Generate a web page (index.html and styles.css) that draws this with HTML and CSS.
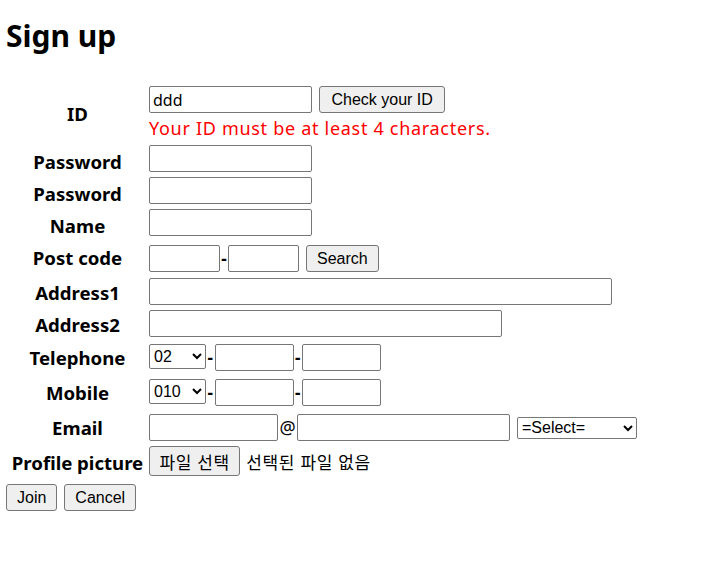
FILE: index.html
```html
<!DOCTYPE html>
<html lang="ko">
<head>
<meta charset="utf-8">
<title>Sign up</title>
<link rel="stylesheet" href="styles.css">
</head>
<body>
<h1 class="title">Sign up</h1>
<form class="signup">
  <table class="form-table">
    <tr class="row row-id">
      <th>ID</th>
      <td>
        <div class="field">
          <input class="input w-id" type="text" value="ddd">
          <button type="button" class="btn btn-gap btn-check">Check your ID</button>
        </div>
        <div class="error">Your ID must be at least 4 characters.</div>
      </td>
    </tr>
    <tr class="row row-low">
      <th>Password</th>
      <td><input class="input w-id" type="password"></td>
    </tr>
    <tr class="row row-low">
      <th>Password</th>
      <td><input class="input w-id" type="password"></td>
    </tr>
    <tr class="row row-low">
      <th>Name</th>
      <td><input class="input w-id" type="text"></td>
    </tr>
    <tr class="row row-post">
      <th>Post code</th>
      <td>
        <div class="field">
          <input class="input w-post" type="text"><span class="sep">-</span><input class="input w-post" type="text">
          <button type="button" class="btn btn-gap">Search</button>
        </div>
      </td>
    </tr>
    <tr class="row">
      <th>Address1</th>
      <td><input class="input w-addr1" type="text"></td>
    </tr>
    <tr class="row">
      <th>Address2</th>
      <td><input class="input w-addr2" type="text"></td>
    </tr>
    <tr class="row row-phone">
      <th>Telephone</th>
      <td>
        <div class="field field-top">
          <select class="select select-phone"><option>02</option><option>031</option><option>032</option></select><span class="sep sep-phone">-</span><input class="input w-phone" type="text"><span class="sep sep-phone">-</span><input class="input w-phone" type="text">
        </div>
      </td>
    </tr>
    <tr class="row row-phone">
      <th>Mobile</th>
      <td>
        <div class="field field-top">
          <select class="select select-phone"><option>010</option><option>011</option><option>016</option></select><span class="sep sep-phone">-</span><input class="input w-phone" type="text"><span class="sep sep-phone">-</span><input class="input w-phone" type="text">
        </div>
      </td>
    </tr>
    <tr class="row row-email">
      <th>Email</th>
      <td>
        <div class="field">
          <input class="input w-email1" type="text"><span class="at">@</span><input class="input w-email2" type="text">
          <select class="select select-email"><option>=Select=</option><option>naver.com</option><option>gmail.com</option></select>
        </div>
      </td>
    </tr>
    <tr class="row row-file">
      <th>Profile picture</th>
      <td>
        <div class="field">
          <button type="button" class="btn btn-file">파일 선택</button>
          <span class="file-name">선택된 파일 없음</span>
        </div>
      </td>
    </tr>
  </table>
  <div class="actions">
    <button type="submit" class="btn btn-action">Join</button>
    <button type="reset" class="btn btn-action">Cancel</button>
  </div>
</form>
</body>
</html>
```
FILE: styles.css
```css
html, body {
  background: #ffffff;
}

body {
  margin: 0;
  padding: 0 6px;
  font-family: "Noto Sans", "Noto Sans CJK KR", sans-serif;
  font-size: 16px;
  color: #000000;
}

.title {
  margin: 16px 0 0;
  height: 40px;
  font-size: 30px;
  font-weight: 700;
  line-height: 40px;
}

.signup {
  margin: 0;
}

.form-table {
  margin-top: 28px;
  border-collapse: separate;
  border-spacing: 0;
}

.form-table th {
  width: 135px;
  padding: 0 4px;
  font-size: 18.6px;
  font-weight: 700;
  text-align: center;
  vertical-align: middle;
  white-space: nowrap;
}

.form-table td {
  padding: 2px 0 3px;
  vertical-align: top;
}

.form-table .row-id th {
  padding-bottom: 1px;
}

.form-table .row-low th {
  padding-top: 4px;
}

.form-table .row-post td {
  padding: 6px 0 4px;
}

.form-table .row-phone td {
  padding: 4px 0;
}

.form-table .row-email td {
  padding: 4px 0 3px;
}

.form-table .row-email th {
  padding-top: 1px;
}

.form-table .row-file td {
  padding: 2px 0 0;
}

.form-table .row-file th {
  padding-top: 5px;
}

.field {
  display: flex;
  align-items: center;
}

.field-top {
  align-items: flex-start;
}

.input {
  box-sizing: border-box;
  height: 27px;
  margin: 0;
  padding: 1px 3px;
  border: 1px solid #767676;
  border-radius: 2px;
  background: #ffffff;
  font-family: "Noto Sans", "Noto Sans CJK KR", sans-serif;
  font-size: 16px;
  color: #000000;
}

.w-id { width: 163px; }
.w-post { width: 71px; }
.w-addr1 { width: 463px; }
.w-addr2 { width: 353px; }
.w-phone { width: 79px; }
.w-email1 { width: 129px; }
.w-email2 { width: 213px; }

.sep {
  width: 8px;
  text-align: center;
  font-size: 17px;
  font-weight: 700;
  line-height: 1;
}

.sep-phone {
  width: 8.5px;
  align-self: center;
}

.at {
  width: 19px;
  text-align: center;
  font-size: 18px;
  line-height: 1;
  position: relative;
  top: -1px;
}

.btn {
  box-sizing: border-box;
  height: 27px;
  margin: 0;
  padding: 0 10px;
  border: 1px solid #767676;
  border-radius: 3px;
  background: #efefef;
  font-family: "Liberation Sans", Arial, sans-serif;
  font-size: 16px;
  color: #000000;
}

.btn-gap {
  margin-left: 7px;
}

.btn-check {
  padding: 0 11.5px;
}

.btn-file {
  height: 30px;
  padding: 0 9.5px;
  font-family: "Noto Sans CJK KR", sans-serif;
  font-size: 17px;
  letter-spacing: 0.6px;
}

.file-name {
  margin-left: 6px;
  font-family: "Noto Sans CJK KR", sans-serif;
  font-size: 17px;
  letter-spacing: 0.6px;
}

.select {
  box-sizing: border-box;
  margin: 0;
  border: 1px solid #767676;
  border-radius: 2px;
  background: #ffffff;
  font-family: "Liberation Sans", Arial, sans-serif;
  font-size: 16px;
  color: #000000;
}

.select-phone {
  width: 57px;
  height: 25px;
}

.select-email {
  width: 120px;
  height: 22px;
  margin-left: 7px;
}

.error {
  margin-top: 4px;
  font-size: 18px;
  letter-spacing: 0.7px;
  color: #ff0000;
  line-height: 23px;
}

.actions {
  display: flex;
  gap: 7px;
  margin-top: 8px;
}

.btn-action {
  height: 27px;
}
```
